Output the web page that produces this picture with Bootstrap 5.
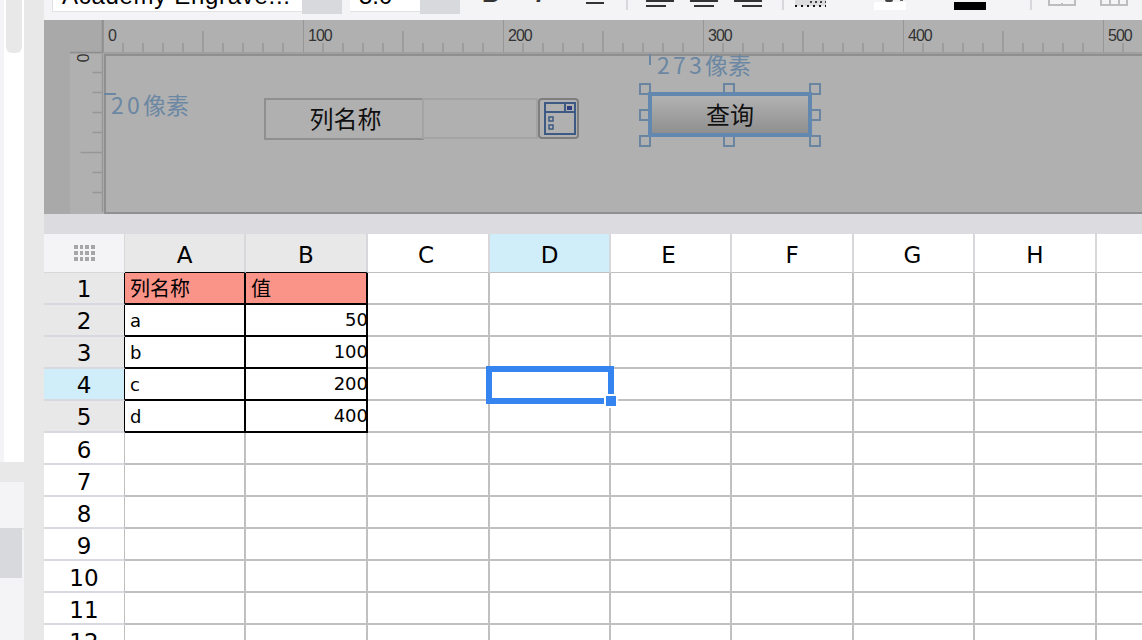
<!DOCTYPE html>
<html lang="zh">
<head>
<meta charset="utf-8">
<title>报表设计器</title>
<link href="https://cdn.jsdelivr.net/npm/bootstrap@5.3.0/dist/css/bootstrap.min.css" rel="stylesheet">
<style>
html,body{height:640px;overflow:hidden;background:#fff}
body{font-family:"DejaVu Sans","Noto Sans CJK SC",sans-serif;color:#000}
.app-shell{width:1142px;height:640px}
/* left rail */
.rail{width:44px;background:#e8e8e8}
.rail-col{width:24px}
.rail-top{height:462px;background:#fff;border-left:4px solid #f4f4f7}
.rail-thumb{width:16px;height:53px;margin-left:2px;background:#e8e8e8;border-radius:0 0 6px 6px}
.rail-bottom{margin-top:20px;height:158px;background:#f4f4f7;padding-top:44px}
.rail-sel{height:52px;background:linear-gradient(#e8e8e8 2px,transparent 2px) no-repeat,#f4f4f7}
.rail-sel-in{width:22px;height:50px;margin-top:2px;background:#d8d9dd}
.main-col{width:1098px}
/* toolbar */
.tbar{height:20px;background:#f4f4f7;flex:none}
.tb-field{height:12px;background:#fff;border-bottom:1px solid #e2e2e4;font:24px/24px "Liberation Sans",sans-serif}
.tb-field span{display:block;margin-top:-16px;white-space:nowrap}
.tb-font{width:250px;margin-left:8px;border-left:1px solid #e2e2e4;padding-left:9px;letter-spacing:.7px}
.tb-size{width:70px;margin-left:8px;padding-left:9px}
.tb-drop{width:40px;height:14px;background:#d8d9dc}
.tb-g{font:24px/24px "Liberation Sans",sans-serif;color:#333;margin-top:-18px}
.tb-b{font-weight:700;margin-left:22px;width:18px}
.tb-i{font-style:italic;margin-left:36px;width:11px;font-weight:700}
.tb-u{margin-left:39px;width:18px;height:24px;text-align:center;position:relative;margin-top:-20px}
.tb-u::after{content:"";position:absolute;left:0;right:0;top:22px;height:1.5px;background:#333}
.tb-sep{width:2px;height:10px;background:#d8d8dc}
.sep-a{margin-left:22px}.sep-b{margin-left:20px}.sep-c{margin-left:44px}
.al-a{margin-left:18px}.al-b{margin-left:16px}
.dot-ic{margin-left:11px}
.sw{width:32px;height:8px;margin-top:2px;position:relative}
.sw-w{margin-left:48px;background:#fff}
.sw-w::before{content:"";position:absolute;left:11px;top:-2px;width:8px;height:2px;border-radius:0 0 3px 3px;background:#444}
.sw-w::after{content:"";position:absolute;left:26px;top:-2px;width:3px;height:1px;background:#666}
.sw-k{margin-left:48px;background:#000}
.ic-a{margin-left:16px}.ic-b{margin-left:24px}
/* designer */
.designer{height:194px;background:#b0b0b0;flex:none}
.rule-top{height:34px}
.corner{width:59px;height:34px;background:#a9a9a9}
.rule-h{width:1039px;height:34px}
.rule-body{height:160px}
.strip{width:26px;background:#a9a9a9}
.rule-v{width:34px}
.tick-lb{position:absolute;top:8px;font:16px/16px "Liberation Sans",sans-serif;letter-spacing:-1px;color:#333}
.lb-0{left:5px}.lb-1{left:205px}.lb-2{left:405px}.lb-3{left:605px}.lb-4{left:805px}.lb-5{left:1005px}
.zero-lb{position:absolute;left:4px;top:-4px;width:16px;font:16px/16px "Liberation Sans",sans-serif;color:#333;text-align:center;transform:rotate(90deg)}
.cv{border:2px solid #8f8f8f;border-width:2px 0 2px 2px}
.dim{position:absolute;font-family:"Noto Sans CJK SC",sans-serif;font-size:23px;line-height:23px;color:#6b87a3;white-space:nowrap}
.dim-num{letter-spacing:3.2px}
.dim-a{left:5px;top:37px}
.dim-b{left:551px;top:-3px}
.mk{position:absolute;background:#6b87a3}
.mk-a{left:-2px;top:37px;width:12px;height:2px}
.mk-b{left:543px;top:-2px;width:2px;height:11px}
.f-font{font-family:"Noto Sans CJK SC",sans-serif;font-size:24px;color:#111}
.cv-lbl{position:absolute;left:158px;top:42px;width:160px;height:42px;border:2px solid #8f8f8f;padding-left:3px;line-height:36px}
.cv-in{position:absolute;left:316px;top:42px;width:116px;height:41px;border:2px solid #a3a3a3;background:transparent}
.cv-pick{position:absolute;left:432px;top:42px;width:41px;height:41px;border:2px solid #7e7e7e;border-radius:4px;padding:2px 0 0 4px}
.hd{position:absolute;width:12px;height:12px;border:2px solid #6a85a0}
.hx-a{left:533px}.hx-b{left:617px}.hx-c{left:703px}
.hy-a{top:27px}.hy-b{top:53px}.hy-c{top:79px}
.cv-btn{position:absolute;left:542px;top:36px;width:164px;height:45px;border:4px solid #6288b0;border-radius:0;background:linear-gradient(#b2b2b2,#8f8f8f);padding:0 0 2px;color:#111;font-size:24px;line-height:32px}
.cv-btn:hover{background:linear-gradient(#b2b2b2,#8f8f8f);border-color:#6288b0;color:#111}
.gap-bar{height:20px;background:#dcdce0;flex:none}
/* sheet */
.sheet-wrap{height:406px}
.sheet{width:1174px;table-layout:fixed;border-collapse:separate;border-spacing:0}
.c81{width:81px}.c121{width:121px}.c122{width:122px}
.sheet th,.sheet td{padding:0;white-space:nowrap}
.sheet tr{height:32px}
.sheet tr.hr{height:39px}
.sheet thead th{font:400 23px/1 "DejaVu Sans",sans-serif;text-align:center;border-right:2px solid #d8d8dc;border-bottom:1px solid #c0c0c0;padding-top:4px}
.sheet thead th.hl{padding-right:4px}
.sheet thead th.hl2{padding-right:2px}
.sheet thead .cn{background:#f4f4f7;border-right:1px solid #d8d8dc;border-bottom-color:#d8d8dc;padding-top:0}
.sheet thead .hg{background:#e8e8e8;border-bottom-color:#000}
.sheet thead .hB{border-right-color:#d8d8dc}
.sheet thead .hs{background:#d0eefa}
.sheet tbody th{font:400 23px/1 "DejaVu Sans",sans-serif;text-align:center;border-bottom:2px solid #d8d8e0;border-right:1px solid #c0c0c0;background:#fff;padding-top:5px}
.sheet tbody th.rg{background:#e8e8e8;border-right-color:#000;padding-top:2px}
.sheet tbody th.rs{background:#d0eefa;border-right-color:#000;padding-top:3px}
.sheet td{border-right:2px solid #c0c0c0;border-bottom:2px solid #c0c0c0;font:18px/1 "DejaVu Sans","Noto Sans CJK SC",sans-serif;vertical-align:middle}
.sheet td.kb{border-color:#000;padding-left:5px;padding-top:2px}
.sheet td.kh{background:#fb9488;font-family:"Noto Sans CJK SC",sans-serif;font-size:20px;padding-top:0}
.sheet td.num{text-align:right;padding-left:0;padding-top:0}
.num-v{display:inline-block;margin-right:-2px}
.sel-box{position:absolute;left:442px;top:132px;width:128px;height:38px;border:6px solid #3584f0}
.sel-h{position:absolute;left:560px;top:160px;width:14px;height:14px;background:#3584f0;border:2px solid #fff}
</style>
</head>
<body>
<div class="app-shell d-flex">
  <aside class="rail flex-none">
    <div class="rail-col">
      <div class="rail-top"><div class="rail-thumb"></div></div>
      <div class="rail-bottom"><div class="rail-sel"><div class="rail-sel-in"></div></div></div>
    </div>
  </aside>
  <div class="main-col d-flex flex-column">
    <div class="tbar d-flex align-items-start overflow-hidden">
      <div class="tb-field tb-font overflow-hidden"><span>Academy Engrave...</span></div>
      <div class="tb-drop"></div>
      <div class="tb-field tb-size overflow-hidden"><span>5.0</span></div>
      <div class="tb-drop"></div>
      <div class="tb-g tb-b">B</div>
      <div class="tb-g tb-i">I</div>
      <div class="tb-g tb-u">U</div>
      <div class="tb-sep sep-a"></div>
      <svg class="al-a" width="28" height="7"><path fill="#333" d="M0 0h28v2H0zM0 5h20v2H0z"/></svg>
      <svg class="al-b" width="28" height="7"><path fill="#333" d="M0 0h28v2H0zM4 5h20v2H4z"/></svg>
      <svg class="al-b" width="28" height="7"><path fill="#333" d="M0 0h28v2H0zM8 5h20v2H8z"/></svg>
      <div class="tb-sep sep-b"></div>
      <svg class="dot-ic" width="31" height="8"><rect y="0" width="31" height="6" fill="#dcdcdf"/><path stroke="#111" stroke-width="2" stroke-dasharray="2 4" d="M0 6h31"/><path stroke="#111" stroke-width="1.5" stroke-dasharray="2 3" d="M15 2h16"/></svg>
      <div class="sw sw-w"></div>
      <div class="sw sw-k"></div>
      <div class="tb-sep sep-c"></div>
      <svg class="ic-a" width="28" height="6"><path fill="none" stroke="#bdbdc0" stroke-width="2" d="M1 0v5h26V0M14 3v2"/></svg>
      <svg class="ic-b" width="28" height="6"><path fill="none" stroke="#bdbdc0" stroke-width="2" d="M1 0v5h26V0M10 0v5M19 0v5"/></svg>
    </div>

    <section class="designer d-flex flex-column">
      <div class="rule-top d-flex">
        <svg class="corner flex-none" width="59" height="34"><path stroke="#8e8e8e" stroke-width="1.5" fill="none" d="M58.500 0v33M26 32.500h33"/></svg>
        <div class="rule-h position-relative flex-none">
          <svg width="1039" height="34" class="d-block">
            <defs>
              <pattern id="rt" width="200" height="34" patternUnits="userSpaceOnUse">
                <path stroke="#969696" stroke-width="1.5" fill="none" d="M20 23v10M40 23v10M60 23v10M80 23v10M100 11v22M120 23v10M140 23v10M160 23v10M180 23v10"/>
                <path stroke="#8e8e8e" stroke-width="1.5" fill="none" d="M0 0v33"/>
                <path stroke="#a0a0a0" stroke-width="2" fill="none" d="M0 33h200"/>
              </pattern>
            </defs>
            <rect width="1039" height="34" fill="url(#rt)"/>
          </svg>
          <span class="tick-lb lb-0">0</span><span class="tick-lb lb-1">100</span><span class="tick-lb lb-2">200</span><span class="tick-lb lb-3">300</span><span class="tick-lb lb-4">400</span><span class="tick-lb lb-5">500</span>
        </div>
      </div>
      <div class="rule-body d-flex">
        <div class="strip flex-none"></div>
        <div class="rule-v flex-none position-relative">
          <svg width="34" height="160" class="d-block"><path stroke="#969696" stroke-width="1.5" fill="none" d="M22.500 18.500H32M22.500 38.500H32M22.500 58.500H32M22.500 78.500H32M10.500 98.500H32M22.500 118.500H32M22.500 138.500H32M32.500 0v158"/></svg>
          <span class="zero-lb">0</span>
        </div>
        <div class="cv flex-grow-1 position-relative">
          <span class="mk mk-a"></span>
          <span class="dim dim-a"><span class="dim-num">20</span>像素</span>
          <span class="mk mk-b"></span>
          <span class="dim dim-b"><span class="dim-num">273</span>像素</span>
          <div class="cv-lbl f-font text-center">列名称</div>
          <div class="cv-in"></div>
          <div class="cv-pick">
            <svg width="32" height="33" class="d-block"><g fill="none" stroke="#3d5a85" stroke-width="2"><rect x="1" y="1" width="30" height="31"/><path d="M1 10h30M21 1v9"/><rect x="5" y="15" width="4" height="4" stroke-width="1.500"/><rect x="5" y="23" width="4" height="4" stroke-width="1.500"/></g><rect x="23" y="4" width="5" height="4" fill="#2e3e7e"/></svg>
          </div>
          <i class="hd hx-a hy-a"></i><i class="hd hx-b hy-a"></i><i class="hd hx-c hy-a"></i>
          <i class="hd hx-a hy-b"></i><i class="hd hx-c hy-b"></i>
          <i class="hd hx-a hy-c"></i><i class="hd hx-b hy-c"></i><i class="hd hx-c hy-c"></i>
          <button type="button" class="btn cv-btn f-font">查询</button>
        </div>
      </div>
    </section>

    <div class="gap-bar"></div>

    <div class="sheet-wrap position-relative overflow-hidden">
      <table class="sheet">
        <colgroup><col class="c81"><col class="c121"><col class="c122"><col class="c122"><col class="c121"><col class="c121"><col class="c122"><col class="c121"><col class="c122"><col class="c121"></colgroup>
        <thead>
          <tr class="hr">
            <th class="cn"><svg width="21" height="16" class="d-block mx-auto"><g fill="#a6a6a6"><path d="M0 0h4v4H0zM6 0h3v4H6zM11 0h4v4h-4zM17 0h4v4h-4zM0 6h4v4H0zM6 6h3v4H6zM11 6h4v4h-4zM17 6h4v4h-4zM0 12h4v4H0zM6 12h3v4H6zM11 12h4v4h-4zM17 12h4v4h-4z"/></g></svg></th>
            <th class="hg">A</th><th class="hg hB">B</th><th class="hl">C</th><th class="hs">D</th><th class="hl">E</th><th>F</th><th class="hl2">G</th><th>H</th><th></th>
          </tr>
        </thead>
        <tbody>
          <tr><th class="rg">1</th><td class="kb kh">列名称</td><td class="kb kh">值</td><td></td><td></td><td></td><td></td><td></td><td></td><td></td></tr>
          <tr><th class="rg">2</th><td class="kb">a</td><td class="kb num"><span class="num-v">50</span></td><td></td><td></td><td></td><td></td><td></td><td></td><td></td></tr>
          <tr><th class="rg">3</th><td class="kb">b</td><td class="kb num"><span class="num-v">100</span></td><td></td><td></td><td></td><td></td><td></td><td></td><td></td></tr>
          <tr><th class="rs">4</th><td class="kb">c</td><td class="kb num"><span class="num-v">200</span></td><td></td><td></td><td></td><td></td><td></td><td></td><td></td></tr>
          <tr><th class="rg">5</th><td class="kb">d</td><td class="kb num"><span class="num-v">400</span></td><td></td><td></td><td></td><td></td><td></td><td></td><td></td></tr>
          <tr><th>6</th><td></td><td></td><td></td><td></td><td></td><td></td><td></td><td></td><td></td></tr>
          <tr><th>7</th><td></td><td></td><td></td><td></td><td></td><td></td><td></td><td></td><td></td></tr>
          <tr><th>8</th><td></td><td></td><td></td><td></td><td></td><td></td><td></td><td></td><td></td></tr>
          <tr><th>9</th><td></td><td></td><td></td><td></td><td></td><td></td><td></td><td></td><td></td></tr>
          <tr><th>10</th><td></td><td></td><td></td><td></td><td></td><td></td><td></td><td></td><td></td></tr>
          <tr><th>11</th><td></td><td></td><td></td><td></td><td></td><td></td><td></td><td></td><td></td></tr>
          <tr><th>12</th><td></td><td></td><td></td><td></td><td></td><td></td><td></td><td></td><td></td></tr>
        </tbody>
      </table>
      <div class="sel-box"></div>
      <div class="sel-h"></div>
    </div>
  </div>
</div>
<script src="https://cdn.jsdelivr.net/npm/bootstrap@5.3.0/dist/js/bootstrap.bundle.min.js"></script>
</body>
</html>
